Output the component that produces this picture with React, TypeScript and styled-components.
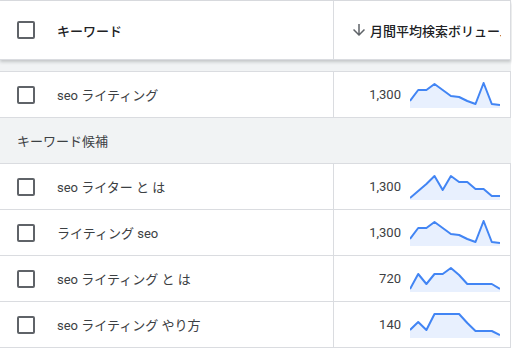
import styled, { createGlobalStyle } from 'styled-components';

const GlobalStyle = createGlobalStyle`
  body {
    margin: 0;
    background: #fff;
    font-family: Roboto, "Noto Sans CJK JP", sans-serif;
    -webkit-font-smoothing: antialiased;
  }
`;

interface KeywordRow {
  keyword: string;
  volume: string;
  trend: number[];
}

const SPARK_W = 90;
const SPARK_H = 26;

const pinned: KeywordRow[] = [
  { keyword: 'seo ライティング', volume: '1,300', trend: [19, 8, 8, 2, 8, 14, 15, 19, 22, 1, 22, 23] },
];

const suggestions: KeywordRow[] = [
  { keyword: 'seo ライター と は', volume: '1,300', trend: [24, 17, 10, 2, 16, 2, 8, 8, 15, 15, 22, 22] },
  { keyword: 'ライティング seo', volume: '1,300', trend: [19, 8, 8, 2, 8, 14, 15, 19, 22, 1, 22, 23] },
  { keyword: 'seo ライティング と は', volume: '720', trend: [23, 8, 18, 8, 8, 2, 9, 18, 18, 18, 18, 23] },
  { keyword: 'seo ライティング やり方', volume: '140', trend: [18, 10, 18, 2, 2, 2, 2, 11, 19, 19, 19, 23] },
];

const Sparkline = ({ values }: { values: number[] }) => {
  const step = SPARK_W / (values.length - 1);
  const pts = values.map((v, i) => `${(i * step).toFixed(1)},${v}`);
  const line = `M${pts.join(' L')}`;
  const area = `${line} L${SPARK_W},${SPARK_H} L0,${SPARK_H} Z`;
  return (
    <SSpark width={SPARK_W} height={SPARK_H} viewBox={`0 0 ${SPARK_W} ${SPARK_H}`}>
      <path d={area} fill="#e8f0fe" />
      <path d={line} fill="none" stroke="#4285f4" strokeWidth={2} strokeLinejoin="round" />
    </SSpark>
  );
};

const ArrowDown = () => (
  <SArrow width={18} height={18} viewBox="0 0 24 24">
    <path d="M20 12l-1.41-1.41L13 16.17V4h-2v12.17l-5.58-5.59L4 12l8 8 8-8z" fill="#5f6368" />
  </SArrow>
);

const Row = ({ row }: { row: KeywordRow }) => (
  <SRow>
    <SKeywordCell>
      <SCheckbox />
      <SKeyword>{row.keyword}</SKeyword>
    </SKeywordCell>
    <SVolumeCell>
      <SVolume>{row.volume}</SVolume>
      <Sparkline values={row.trend} />
    </SVolumeCell>
  </SRow>
);

export default function App() {
  return (
    <>
      <GlobalStyle />
      <STable>
        <SHeader>
          <SKeywordCell>
            <SCheckbox />
            <SHeadText>キーワード</SHeadText>
          </SKeywordCell>
          <SHeadVolumeCell>
            <ArrowDown />
            <SHeadClip>月間平均検索ボリューム</SHeadClip>
          </SHeadVolumeCell>
        </SHeader>
        <SSpacer />
        {pinned.map((r) => (
          <Row key={r.keyword} row={r} />
        ))}
        <SGroup>キーワード候補</SGroup>
        {suggestions.map((r) => (
          <Row key={r.keyword} row={r} />
        ))}
      </STable>
    </>
  );
}

const STable = styled.div`
  width: 511px;
  border-top: 1px solid #dadce0;
  color: #3c4043;
  font-size: 13px;
`;

const SRow = styled.div`
  display: grid;
  grid-template-columns: 334px 177px;
  height: 46px;
  box-sizing: border-box;
  border-bottom: 1px solid #dadce0;
`;

const SHeader = styled(SRow)`
  position: relative;
  z-index: 1;
  height: 59px;
  background: #fff;
  box-shadow: 0 2px 3px rgba(60, 64, 67, 0.25);
`;

const SKeywordCell = styled.div`
  display: flex;
  align-items: center;
  gap: 22px;
  padding-left: 17px;
  border-right: 1px solid #dadce0;
`;

const SVolumeCell = styled.div`
  display: flex;
  align-items: center;
  justify-content: flex-end;
  gap: 9px;
  padding-right: 10px;
  border-right: 1px solid #dadce0;
`;

const SHeadVolumeCell = styled.div`
  display: flex;
  align-items: center;
  gap: 2px;
  padding: 0 9px 0 16px;
  overflow: hidden;
  border-right: 1px solid #dadce0;
`;

const SCheckbox = styled.span`
  flex: none;
  width: 18px;
  height: 18px;
  box-sizing: border-box;
  border: 2px solid #5f6368;
  border-radius: 2px;
`;

const SHeadText = styled.span`
  font-weight: 500;
  color: #202124;
`;

const SHeadClip = styled.span`
  flex: 1;
  min-width: 0;
  overflow: hidden;
  white-space: nowrap;
  font-weight: 500;
  color: #202124;
`;

const SArrow = styled.svg`
  flex: none;
`;

const SKeyword = styled.span`
  white-space: nowrap;
`;

const SVolume = styled.span`
  font-size: 13px;
`;

const SSpark = styled.svg`
  flex: none;
  display: block;
`;

const SSpacer = styled.div`
  height: 11px;
  background: #f1f3f4;
  border-bottom: 1px solid #dadce0;
`;

const SGroup = styled.div`
  display: flex;
  align-items: center;
  height: 46px;
  box-sizing: border-box;
  padding-left: 17px;
  background: #f1f3f4;
  border-bottom: 1px solid #dadce0;
`;
